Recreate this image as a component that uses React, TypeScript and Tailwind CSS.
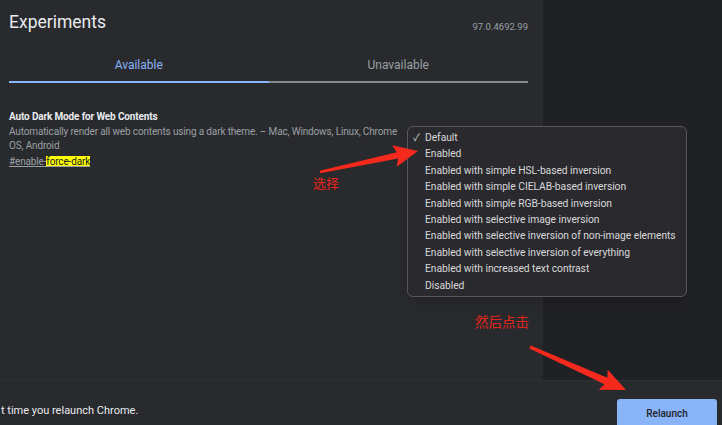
import React from "react";

const options = [
  "Default",
  "Enabled",
  "Enabled with simple HSL-based inversion",
  "Enabled with simple CIELAB-based inversion",
  "Enabled with simple RGB-based inversion",
  "Enabled with selective image inversion",
  "Enabled with selective inversion of non-image elements",
  "Enabled with selective inversion of everything",
  "Enabled with increased text contrast",
  "Disabled",
];

function arrowPoints(tail: [number, number], tip: [number, number], headLen: number, headHalf: number, shaftTail: number, shaftHead: number) {
  const dx = tip[0] - tail[0];
  const dy = tip[1] - tail[1];
  const len = Math.hypot(dx, dy);
  const ux = dx / len;
  const uy = dy / len;
  const nx = -uy;
  const ny = ux;
  const bx = tip[0] - ux * headLen;
  const by = tip[1] - uy * headLen;
  const pts: [number, number][] = [
    [tail[0] + nx * shaftTail, tail[1] + ny * shaftTail],
    [bx + nx * shaftHead, by + ny * shaftHead],
    [bx + nx * headHalf - ux * 3, by + ny * headHalf - uy * 3],
    [tip[0], tip[1]],
    [bx - nx * headHalf - ux * 3, by - ny * headHalf - uy * 3],
    [bx - nx * shaftHead, by - ny * shaftHead],
    [tail[0] - nx * shaftTail, tail[1] - ny * shaftTail],
  ];
  return pts.map((p) => `${p[0].toFixed(1)},${p[1].toFixed(1)}`).join(" ");
}

export default function App() {
  return (
    <div
      className="relative w-[722px] h-[425px] overflow-hidden bg-[#202124] flex flex-col"
      style={{ fontFamily: "Roboto, 'Noto Sans', 'Noto Sans CJK SC', sans-serif" }}
    >
      <div className="flex flex-1 min-h-0">
        <div className="w-[543px] bg-[#292a2d] pl-[9px] pr-[15px] flex flex-col">
          <div className="flex items-start justify-between h-[36px]">
            <h1 className="text-[17.5px] leading-none text-[#e8eaed] mt-[14px]">Experiments</h1>
            <span className="text-[9.5px] leading-none text-[#9aa0a6] mt-[22px]">97.0.4692.99</span>
          </div>
          <div className="flex mt-[13px]">
            <div className="flex-1 h-[34px] flex flex-col">
              <div className="flex-1 flex items-center justify-center text-[12px] text-[#8ab4f8]">Available</div>
              <div className="h-[2px] bg-[#8ab4f8]"></div>
            </div>
            <div className="flex-1 h-[34px] flex flex-col">
              <div className="flex-1 flex items-center justify-center text-[12px] text-[#9aa0a6]">Unavailable</div>
              <div className="h-[2px] bg-[#9aa0a6] opacity-80"></div>
            </div>
          </div>
          <div className="mt-[27px] text-[10px] leading-[14px] tracking-[-0.15px]">
            <div className="font-bold text-[#e8eaed]">Auto Dark Mode for Web Contents</div>
            <div className="text-[#9aa0a6] w-[400px] mt-[1px]">
              Automatically render all web contents using a dark theme. – Mac, Windows, Linux, Chrome OS, Android
            </div>
            <div className="mt-[2px] text-[#9aa0a6] underline">
              #enable-<span className="bg-[#ffff00] text-[#202124]">force-dark</span>
            </div>
          </div>
        </div>
        <div className="flex-1 bg-[#202124]"></div>
      </div>
      <div className="h-[45px] bg-[#292a2d] flex items-end justify-between border-t border-[#2e2f33]">
        <span className="text-[11px] text-[#e8eaed] ml-[1px] mb-[6px] whitespace-nowrap">t time you relaunch Chrome.</span>
        <div className="w-[100px] h-[28px] bg-[#8ab4f8] mr-[5px] mb-[-2px] rounded-t-[3px] flex items-center justify-center text-[10px] font-medium text-[#202124]">
          Relaunch
        </div>
      </div>

      <div className="absolute left-[407px] top-[126px] w-[280px] h-[171px] rounded-[6px] border border-[#58585c] bg-[#2a2a2e] shadow-lg py-[3px]">
        {options.map((o, i) => (
          <div key={o} className="h-[16.4px] flex items-center text-[10.3px] text-[#d8d8da] leading-none whitespace-nowrap tracking-[-0.05px]">
            <span className="w-[17px] pl-[5px] text-[10px]">{i === 0 ? "✓" : ""}</span>
            <span>{o}</span>
          </div>
        ))}
      </div>

      <svg className="absolute inset-0 pointer-events-none" width="722" height="425">
        <polygon points={arrowPoints([320, 172], [418, 151], 21, 11, 1.2, 3.2)} fill="#f5291c" />
        <polygon points={arrowPoints([530, 347], [626, 390], 22, 11, 1.5, 3.5)} fill="#f5291c" />
      </svg>
      <div className="absolute left-[313px] top-[177px] text-[13px] text-[#e4261a] leading-none">选择</div>
      <div className="absolute left-[475px] top-[316px] text-[13.5px] text-[#e4261a] leading-none">然后点击</div>
    </div>
  );
}
